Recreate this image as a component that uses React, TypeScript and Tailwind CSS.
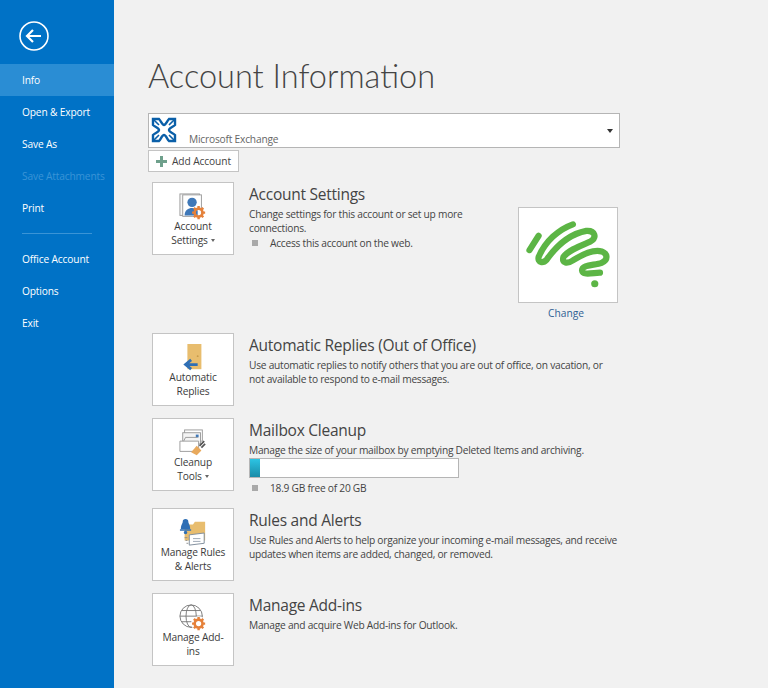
const font = { fontFamily: '"Open Sans", "Noto Sans", sans-serif' }

function BackIcon() {
  return (
    <svg width="30" height="30" viewBox="0 0 30 30" fill="none" stroke="white">
      <circle cx="15" cy="15" r="14" strokeWidth="1.6" />
      <path d="M8 15H22M14 9L8 15L14 21" strokeWidth="2.2" />
    </svg>
  )
}

function ExchangeIcon() {
  return (
    <svg width="26" height="26" viewBox="0 0 26 26" fill="none" stroke="#0a5fa8">
      <path d="M2 8V2H8C10 4 11 8 13 8C15 8 16 4 18 2H24V8C22 10 18 11 18 13C18 15 22 16 24 18V24H18C16 22 15 18 13 18C11 18 10 22 8 24H2V18C4 16 8 15 8 13C8 11 4 10 2 8Z" strokeWidth="2.4" />
      <path d="M3 3L8 8M23 3L18 8M3 23L8 18M23 23L18 18" strokeWidth="1.6" />
    </svg>
  )
}

function GearIcon({ x, y }: { x: number; y: number }) {
  return (
    <g transform={`translate(${x} ${y})`}>
      <circle r="4.2" fill="none" stroke="#e5813a" strokeWidth="2.8" />
      <path d="M0 -7V-4.5M0 7V4.5M-7 0H-4.5M7 0H4.5M-5 -5L-3 -3M5 5L3 3M5 -5L3 -3M-5 5L-3 3" stroke="#e5813a" strokeWidth="2.6" />
    </g>
  )
}

function AccountIcon() {
  return (
    <svg width="28" height="28" viewBox="0 0 30 30">
      <rect x="1" y="1" width="21" height="23" fill="#f7f7f7" stroke="#999" />
      <rect x="4" y="2" width="20" height="23" fill="#fff" stroke="#999" />
      <circle cx="14" cy="10" r="5" fill="#3f78b8" />
      <path d="M6 24C6 18 10 16 14 16C17 16 19 17 20 19V24Z" fill="#3f78b8" />
      <GearIcon x={21} y={21} />
    </svg>
  )
}

function RepliesIcon() {
  return (
    <svg width="28" height="28" viewBox="0 0 30 30">
      <rect x="9" y="0" width="15" height="27" fill="#e8bd6e" />
      <circle cx="20" cy="13" r="1" fill="#c79a4a" />
      <path d="M20 22H7M13 17L7 22L13 27" fill="none" stroke="#2f6fb5" strokeWidth="3" />
    </svg>
  )
}

function CleanupIcon() {
  return (
    <svg width="28" height="28" viewBox="0 0 30 30" fill="none">
      <rect x="6" y="1" width="19" height="12" fill="#fff" stroke="#999" />
      <rect x="4" y="4" width="19" height="12" fill="#f4f4f4" stroke="#999" />
      <rect x="18" y="6" width="3" height="3" fill="#3f78b8" />
      <path d="M1 13H21V24H1Z" fill="#fff" stroke="#999" />
      <path d="M5 13L7 9H20" stroke="#999" />
      <path d="M13 25L19 18L24 23L19 28Z" fill="#e8a95c" />
      <path d="M22 18L27 13M24 20L28 16" stroke="#555" strokeWidth="1.8" />
    </svg>
  )
}

function RulesIcon() {
  return (
    <svg width="28" height="30" viewBox="0 0 30 32">
      <path d="M6 7H15L17 4H28V24H6Z" fill="#e8bd6e" />
      <path d="M2 12C2 7 4 6 4 4C4 2 5 1 7 1C9 1 10 2 10 4C10 6 12 7 12 12Z" fill="#2f6fb5" />
      <rect x="1" y="12" width="12" height="1.6" fill="#2f6fb5" />
      <circle cx="7" cy="15.5" r="1.8" fill="#2f6fb5" />
      <path d="M11 18L27 16V27L11 29Z" fill="#fff" stroke="#7c8a99" />
      <path d="M15 22H23M15 25H23" stroke="#9aa5b1" />
      <path d="M6 21H9M7 24H9M8 27H10" stroke="#8c8c8c" />
    </svg>
  )
}

function AddinsIcon() {
  return (
    <svg width="28" height="28" viewBox="0 0 30 30" fill="none" stroke="#777">
      <circle cx="13" cy="13" r="12" />
      <ellipse cx="13" cy="13" rx="5.5" ry="12" />
      <path d="M1 13H25M3 7H23M3 19H23" />
      <g stroke="none">
        <circle cx="21" cy="21" r="8" fill="#fff" />
      </g>
      <GearIcon x={21} y={21} />
    </svg>
  )
}

function Bullet({ children }: { children: string }) {
  return (
    <div className="flex items-center h-[14px] mt-[1px] pl-[3px]">
      <div className="w-[6px] h-[6px] bg-[#a9a9a9] mr-[12px]"></div>
      <span>{children}</span>
    </div>
  )
}

function ActionButton({ icon, lines, caret }: { icon: React.ReactNode; lines: string[]; caret?: boolean }) {
  return (
    <div className="w-[82px] h-[73px] shrink-0 bg-white border border-[#c4c4c4] flex flex-col items-center pt-[10px] text-[#3b3b3b]">
      <div className="h-[27px] flex items-center justify-center">{icon}</div>
      <div className="text-center text-[10.2px] tracking-[-0.15px] leading-[13.5px]">
        <div>{lines[0]}</div>
        <div className="flex items-center justify-center">
          {lines[1]}
          {caret && <span className="ml-[3px] mt-[1px] border-x-[2.5px] border-t-[3px] border-x-transparent border-t-[#666]"></span>}
        </div>
      </div>
    </div>
  )
}

function Section({ title, children, icon, lines, caret, className }: {
  title: string
  children: React.ReactNode
  icon: React.ReactNode
  lines: string[]
  caret?: boolean
  className?: string
}) {
  return (
    <div className={`flex h-[73px] ${className ?? ''}`}>
      <ActionButton icon={icon} lines={lines} caret={caret} />
      <div className="ml-[15px]">
        <h2 className="text-[15.5px] tracking-[-0.25px] leading-[22px] mt-[1px] text-[#444]">{title}</h2>
        <div className="mt-[2px] text-[10.2px] tracking-[-0.25px] leading-[14px] text-[#444]">{children}</div>
      </div>
    </div>
  )
}

export default function App() {
  const top = ['Info', 'Open & Export', 'Save As', 'Save Attachments', 'Print']
  const bottom = ['Office Account', 'Options', 'Exit']

  return (
    <div className="flex w-[768px] h-[688px] overflow-hidden bg-[#f1f1f1]" style={font}>
      <aside className="w-[114px] shrink-0 bg-[#0072c6] text-white text-[10.2px] tracking-[-0.15px]">
        <div className="h-[64px] pt-[21px] pl-[19px]">
          <BackIcon />
        </div>
        {top.map((item) => (
          <div
            key={item}
            className={`h-[32px] pl-[22px] pt-[1px] flex items-center ${item === 'Info' ? 'bg-[#2a8dd4]' : ''} ${item === 'Save Attachments' ? 'text-[#3a94d6]' : ''}`}
          >
            {item}
          </div>
        ))}
        <div className="h-[1px] w-[70px] ml-[22px] mt-[9px] mb-[9px] bg-[#3a94d6]"></div>
        {bottom.map((item) => (
          <div key={item} className="h-[32px] pl-[22px] pt-[1px] flex items-center">{item}</div>
        ))}
      </aside>

      <main className="flex-1 pl-[34px] pt-[55px]">
        <h1 className="text-[32.5px] leading-[42px] font-light text-[#444]" style={{ fontFamily: 'Lato, sans-serif' }}>Account Information</h1>

        <div className="mt-[16px] w-[472px] h-[35px] bg-white border border-[#b5b5b5] flex items-stretch relative">
          <div className="pl-[2px] pt-[3px]"><ExchangeIcon /></div>
          <div className="ml-[12px] mt-[18px] text-[10.2px] tracking-[-0.2px] leading-[14px] text-[#666]">Microsoft Exchange</div>
          <span className="absolute right-[6px] top-[15px] border-x-[3px] border-t-[4px] border-x-transparent border-t-[#333]"></span>
        </div>

        <div className="mt-[2px] w-[91px] h-[22px] bg-white border border-[#c4c4c4] flex items-center pl-[7px] pt-[1px] text-[10.2px] tracking-[-0.1px] text-[#444]">
          <svg width="11" height="11" viewBox="0 0 11 11" className="mr-[5px]">
            <path d="M4 0H7V4H11V7H7V11H4V7H0V4H4Z" fill="#6fa08c" />
          </svg>
          Add Account
        </div>

        <div className="pl-[4px]">
          <div className="flex mt-[10px] w-[470px] h-[151px] relative">
            <Section title="Account Settings" icon={<AccountIcon />} lines={['Account', 'Settings']} caret>
              <p className="w-[240px]">Change settings for this account or set up more connections.</p>
              <Bullet>Access this account on the web.</Bullet>
            </Section>
            <div className="absolute left-[366px] top-[25px] flex flex-col items-center">
              <div className="w-[100px] h-[96px] bg-white border border-[#c4c4c4]">
                <svg width="98" height="94" viewBox="52 322 300 288" fill="none" stroke="#5cb545" strokeWidth="19" strokeLinecap="round" strokeLinejoin="round">
                  <path d="M84 451L112 407" />
                  <path d="M217 372C172 388 132 425 112 472C108 490 126 492 137 480C165 440 205 402 258 392C285 390 292 412 270 425C240 438 205 450 188 472C182 492 200 494 218 482C245 465 280 448 305 455C325 463 325 482 305 490C285 498 245 495 245 513C247 530 280 520 300 520" />
                  <circle cx="284" cy="554" r="11" fill="#5cb545" stroke="none" />
                </svg>
              </div>
              <div className="mt-[3px] pr-[4px] text-[10.2px] leading-[14px] text-[#2f5f94]">Change</div>
            </div>
          </div>

          <Section title="Automatic Replies (Out of Office)" icon={<RepliesIcon />} lines={['Automatic', 'Replies']}>
            <p className="w-[360px]">Use automatic replies to notify others that you are out of office, on vacation, or not available to respond to e-mail messages.</p>
          </Section>

          <Section className="mt-[12px]" title="Mailbox Cleanup" icon={<CleanupIcon />} lines={['Cleanup', 'Tools']} caret>
            <p>Manage the size of your mailbox by emptying Deleted Items and archiving.</p>
            <div className="w-[210px] h-[20px] mt-[1px] mb-[3px] bg-white border border-[#b5b5b5]">
              <div className="w-[10px] h-full bg-gradient-to-b from-[#2cc4e4] to-[#1a8ca8]"></div>
            </div>
            <Bullet>18.9 GB free of 20 GB</Bullet>
          </Section>

          <Section className="mt-[17px]" title="Rules and Alerts" icon={<RulesIcon />} lines={['Manage Rules', '& Alerts']}>
            <p className="w-[370px]">Use Rules and Alerts to help organize your incoming e-mail messages, and receive updates when items are added, changed, or removed.</p>
          </Section>

          <Section className="mt-[12px]" title="Manage Add-ins" icon={<AddinsIcon />} lines={['Manage Add-', 'ins']}>
            <p>Manage and acquire Web Add-ins for Outlook.</p>
          </Section>
        </div>
      </main>
    </div>
  )
}
